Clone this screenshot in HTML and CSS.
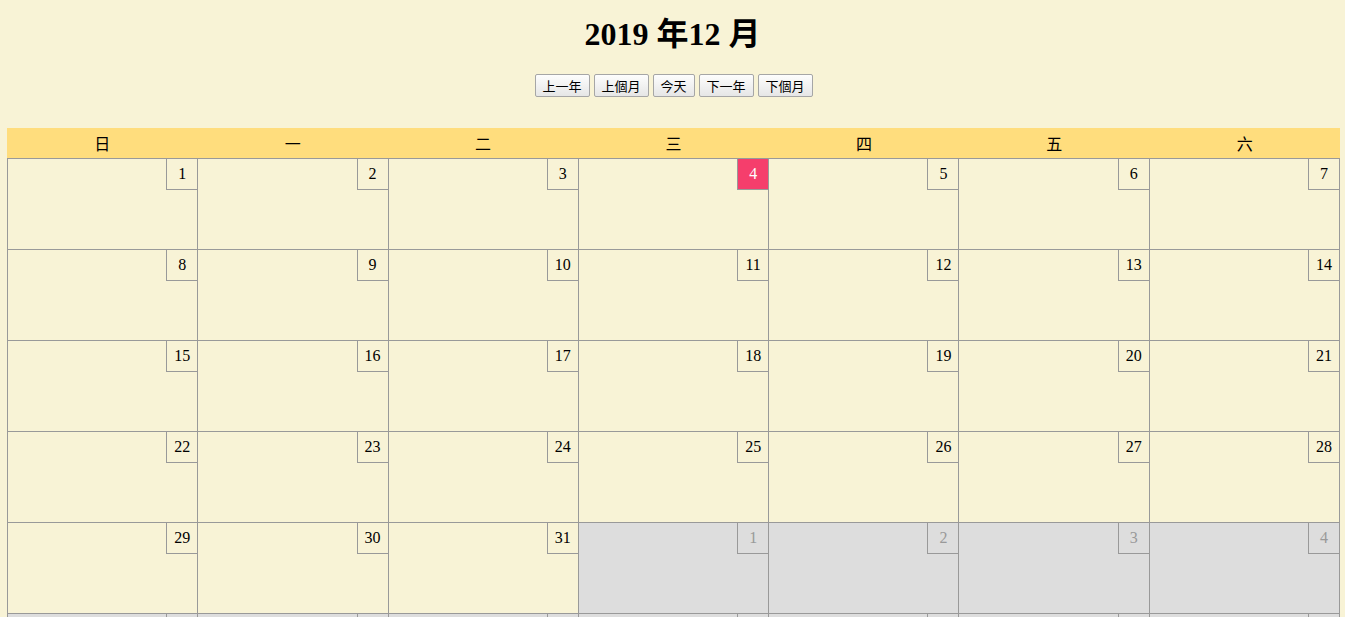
FILE: index.html
```html
<!DOCTYPE html>
<html lang="zh-Hant">
<head>
<meta charset="utf-8">
<title>2019 年12 月</title>
<link rel="stylesheet" href="styles.css">
</head>
<body>
<h1 class="title">2019 年12 月</h1>
<div class="controls">
  <button class="btn">上一年</button>
  <button class="btn">上個月</button>
  <button class="btn btn-short">今天</button>
  <button class="btn">下一年</button>
  <button class="btn">下個月</button>
</div>
<div class="calendar">
  <div class="weekdays">
    <div class="wd">日</div><div class="wd">一</div><div class="wd">二</div><div class="wd">三</div><div class="wd">四</div><div class="wd">五</div><div class="wd">六</div>
  </div>
  <div class="days">
    <div class="day"><span class="num">1</span></div>
    <div class="day"><span class="num">2</span></div>
    <div class="day"><span class="num">3</span></div>
    <div class="day"><span class="num today">4</span></div>
    <div class="day"><span class="num">5</span></div>
    <div class="day"><span class="num">6</span></div>
    <div class="day"><span class="num">7</span></div>
    <div class="day"><span class="num">8</span></div>
    <div class="day"><span class="num">9</span></div>
    <div class="day"><span class="num">10</span></div>
    <div class="day"><span class="num">11</span></div>
    <div class="day"><span class="num">12</span></div>
    <div class="day"><span class="num">13</span></div>
    <div class="day"><span class="num">14</span></div>
    <div class="day"><span class="num">15</span></div>
    <div class="day"><span class="num">16</span></div>
    <div class="day"><span class="num">17</span></div>
    <div class="day"><span class="num">18</span></div>
    <div class="day"><span class="num">19</span></div>
    <div class="day"><span class="num">20</span></div>
    <div class="day"><span class="num">21</span></div>
    <div class="day"><span class="num">22</span></div>
    <div class="day"><span class="num">23</span></div>
    <div class="day"><span class="num">24</span></div>
    <div class="day"><span class="num">25</span></div>
    <div class="day"><span class="num">26</span></div>
    <div class="day"><span class="num">27</span></div>
    <div class="day"><span class="num">28</span></div>
    <div class="day"><span class="num">29</span></div>
    <div class="day"><span class="num">30</span></div>
    <div class="day"><span class="num">31</span></div>
    <div class="day other"><span class="num">1</span></div>
    <div class="day other"><span class="num">2</span></div>
    <div class="day other"><span class="num">3</span></div>
    <div class="day other"><span class="num">4</span></div>
    <div class="day other"><span class="num">5</span></div>
    <div class="day other"><span class="num">6</span></div>
    <div class="day other"><span class="num">7</span></div>
    <div class="day other"><span class="num">8</span></div>
    <div class="day other"><span class="num">9</span></div>
    <div class="day other"><span class="num">10</span></div>
    <div class="day other"><span class="num">11</span></div>
  </div>
</div>
</body>
</html>
```
FILE: styles.css
```css
html, body {
  margin: 0;
  padding: 0;
}
body {
  background: #f8f3d6;
  font-family: "Liberation Serif", "Noto Sans CJK TC", serif;
  color: #000;
}
.title {
  font-size: 32px;
  font-weight: bold;
  text-align: center;
  margin: 0;
  padding-top: 13px;
  line-height: 42px;
}
.controls {
  margin-top: 19px;
  padding-left: 2px;
  height: 23px;
  display: flex;
  justify-content: center;
  gap: 4px;
}
.btn {
  font-family: "Noto Sans CJK TC", sans-serif;
  font-size: 13px;
  line-height: 19px;
  width: 55px;
  height: 23px;
  padding: 1px 0;
  margin: 0;
  border: 1px solid #a6a6a6;
  border-radius: 2px;
  background: linear-gradient(#fdfdfd, #e6e6e6);
  color: #000;
  box-sizing: border-box;
  text-align: center;
}
.btn-short {
  width: 42px;
}
.calendar {
  margin: 31px 0 0 7px;
  width: 1333px;
}
.weekdays {
  display: grid;
  grid-template-columns: repeat(7, 1fr);
  background: #ffdd7d;
  height: 30px;
}
.wd {
  display: flex;
  align-items: center;
  justify-content: center;
  font-family: "Noto Sans CJK TC", sans-serif;
  font-size: 16px;
}
.days {
  display: grid;
  grid-template-columns: repeat(7, 1fr);
  border-right: 1px solid #999;
}
.day {
  height: 91px;
  box-sizing: border-box;
  border-top: 1px solid #999;
  border-left: 1px solid #999;
  display: flex;
  justify-content: flex-end;
  align-items: flex-start;
}
.num {
  width: 30px;
  height: 30px;
  border-left: 1px solid #999;
  border-bottom: 1px solid #999;
  display: flex;
  align-items: center;
  justify-content: center;
  font-size: 16px;
}
.num.today {
  background: #f53e6c;
  color: #fff;
}
.day.other {
  background: #dddddd;
}
.day.other .num {
  color: #999;
}
```
